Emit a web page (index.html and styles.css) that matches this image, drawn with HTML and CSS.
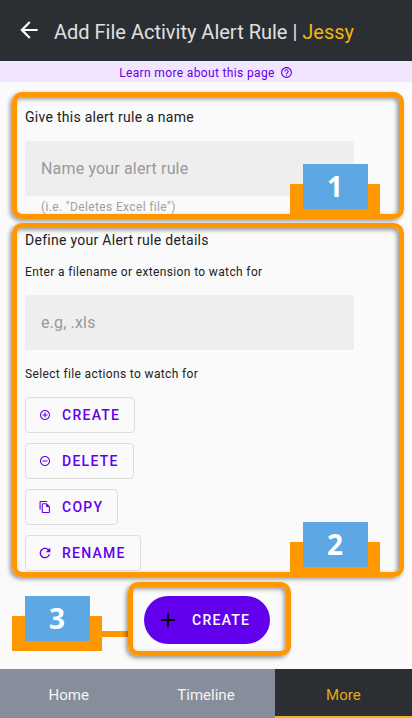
FILE: index.html
```html
<!DOCTYPE html>
<html lang="en">
<head>
<meta charset="UTF-8">
<meta name="viewport" content="width=device-width, initial-scale=1.0">
<title>Add File Activity Alert Rule</title>
<link rel="stylesheet" href="styles.css">
</head>
<body>
<header class="header">
    <button class="back" type="button" aria-label="Back">
        <svg width="26" height="26" viewBox="0 0 24 24" fill="#ffffff"><path d="M20 11H7.83l5.59-5.59L12 4l-8 8 8 8 1.41-1.41L7.83 13H20v-2z"/></svg>
    </button>
    <h1>Add File Activity Alert Rule | <span class="name">Jessy</span></h1>
</header>

<a class="learn" href="#">Learn more about this page
    <svg width="13" height="13" viewBox="0 0 24 24" fill="currentColor"><path d="M11 18h2v-2h-2v2zm1-16C6.48 2 2 6.48 2 12s4.48 10 10 10 10-4.48 10-10S17.52 2 12 2zm0 18c-4.41 0-8-3.59-8-8s3.59-8 8-8 8 3.59 8 8-3.59 8-8 8zm0-14c-2.21 0-4 1.79-4 4h2c0-1.1.9-2 2-2s2 .9 2 2c0 2-3 1.75-3 5h2c0-2.25 3-2.5 3-5 0-2.21-1.79-4-4-4z"/></svg>
</a>

<main>
    <!-- Step 1: rule name -->
    <section class="step step-name">
        <label class="title" for="ruleName">Give this alert rule a name</label>
        <input class="field" type="text" id="ruleName" placeholder="Name your alert rule">
        <div class="hint">(i.e. "Deletes Excel file")</div>
        <div class="badge"><span>1</span></div>
    </section>

    <!-- Step 2: rule details -->
    <section class="step step-details">
        <h2 class="title">Define your Alert rule details</h2>
        <label class="label" for="fileName">Enter a filename or extension to watch for</label>
        <input class="field" type="text" id="fileName" placeholder="e.g, .xls">
        <div class="label" id="actionsLabel">Select file actions to watch for</div>
        <div class="actions" role="group" aria-labelledby="actionsLabel">
            <button class="action" type="button">
                <svg width="12" height="12" viewBox="0 0 24 24" fill="currentColor"><path d="M13 7h-2v4H7v2h4v4h2v-4h4v-2h-4V7zm-1-5C6.48 2 2 6.48 2 12s4.48 10 10 10 10-4.48 10-10S17.52 2 12 2zm0 18c-4.41 0-8-3.59-8-8s3.59-8 8-8 8 3.59 8 8-3.59 8-8 8z"/></svg>
                CREATE
            </button>
            <button class="action" type="button">
                <svg width="12" height="12" viewBox="0 0 24 24" fill="currentColor"><path d="M7 11v2h10v-2H7zm5-9C6.48 2 2 6.48 2 12s4.48 10 10 10 10-4.48 10-10S17.52 2 12 2zm0 18c-4.41 0-8-3.59-8-8s3.59-8 8-8 8 3.59 8 8-3.59 8-8 8z"/></svg>
                DELETE
            </button>
            <button class="action" type="button">
                <svg width="12" height="12" viewBox="1 1 22 22" fill="currentColor"><path d="M16 1H4c-1.1 0-2 .9-2 2v14h2V3h12V1zm-1 4H8c-1.1 0-1.99.9-1.99 2L6 21c0 1.1.89 2 1.99 2H19c1.1 0 2-.9 2-2V11l-6-6zM8 21V7h6v5h5v9H8z"/></svg>
                COPY
            </button>
            <button class="action" type="button">
                <svg width="12" height="12" viewBox="3 3 18 18" fill="currentColor"><path d="M17.65 6.35C16.2 4.9 14.21 4 12 4c-4.42 0-7.99 3.58-7.99 8s3.57 8 7.99 8c3.73 0 6.84-2.55 7.73-6h-2.08c-.82 2.33-3.04 4-5.65 4-3.31 0-6-2.69-6-6s2.69-6 6-6c1.66 0 3.14.69 4.22 1.78L13 11h7V4l-2.35 2.35z"/></svg>
                RENAME
            </button>
        </div>
        <div class="badge"><span>2</span></div>
    </section>

    <!-- Step 3: submit -->
    <section class="submit-row">
        <div class="badge"><span>3</span></div>
        <div class="connector"></div>
        <div class="step step-submit">
            <button class="create" type="button">
                <svg width="24" height="24" viewBox="0 0 24 24" fill="#000000"><path d="M19 13h-6v6h-2v-6H5v-2h6V5h2v6h6v2z"/></svg>
                CREATE
            </button>
        </div>
    </section>
</main>

<nav class="tabs">
    <a href="#">Home</a>
    <a href="#">Timeline</a>
    <a class="active" href="#">More</a>
</nav>
</body>
</html>
```
FILE: styles.css
```css
* {
    box-sizing: border-box;
}
body {
    margin: 0;
    min-height: 100vh;
    display: flex;
    flex-direction: column;
    background-color: #fafafa;
    color: #212121;
    font-family: Roboto, sans-serif;
    font-size: 14px;
}
h1, h2 {
    margin: 0;
    font-weight: 400;
}
button {
    font-family: inherit;
    cursor: pointer;
}
.header {
    display: flex;
    align-items: center;
    gap: 12px;
    height: 61px;
    padding: 2px 16px 0;
    background-color: #2b2e33;
    color: #e0e0e0;
}
.header h1 {
    font-size: 20px;
    line-height: 24px;
}
.header .name {
    color: #f5b50a;
}
.back {
    display: flex;
    padding: 0 0 4px;
    border: none;
    background: none;
}
.learn {
    display: flex;
    justify-content: center;
    align-items: center;
    gap: 5px;
    height: 21px;
    padding-top: 2px;
    background-color: #f2e5ff;
    color: #6200ee;
    font-size: 12px;
    letter-spacing: 0.03em;
    text-decoration: none;
}
main {
    flex: 1;
    padding: 10px 8px 13px 12px;
}

/* Highlighted steps */
.step {
    position: relative;
    border: 5px solid #ff9800;
    border-radius: 10px;
    box-shadow: -2px 2px 4px rgba(0, 0, 0, 0.4), inset -2px 2px 4px rgba(0, 0, 0, 0.4);
}
.step-name {
    padding: 10px 8px 0;
}
.step-details {
    margin-top: 4px;
    padding: 2px 8px 1px;
}
.title {
    display: block;
    font-size: 14px;
    line-height: 20px;
    letter-spacing: 0.02em;
}
.label {
    display: block;
    margin: 12px 0 13px;
    font-size: 12px;
    line-height: 20px;
    letter-spacing: 0.03em;
}
.field {
    display: block;
    width: 90%;
    height: 55px;
    padding: 0 16px;
    border: none;
    border-radius: 4px 4px 0 0;
    background-color: #eeeeee;
    color: #212121;
    font-family: inherit;
    font-size: 16px;
    letter-spacing: 0.01em;
}
.field::placeholder {
    color: #999999;
}
.step-name .field {
    margin-top: 14px;
}
.step-details .field {
    margin-bottom: 14px;
}
.hint {
    margin-top: 4px;
    padding-left: 16px;
    color: #a0a0a0;
    font-size: 12px;
    line-height: 14px;
    letter-spacing: 0.03em;
}
.actions {
    display: flex;
    flex-direction: column;
    align-items: flex-start;
    gap: 10px;
}
.action {
    display: flex;
    align-items: center;
    gap: 11px;
    height: 36px;
    padding: 0 14px 0 13px;
    border: 1px solid #dddddd;
    border-radius: 4px;
    background: none;
    color: #6200ee;
    font-size: 14px;
    font-weight: 500;
    letter-spacing: 0.09em;
}

/* Numbered badges */
.badge {
    width: 90px;
    height: 30px;
    background-color: #ff9800;
}
.badge span {
    position: relative;
    top: -20px;
    display: block;
    width: 65px;
    height: 45px;
    margin: 0 auto;
    background-color: #5ea7e5;
    color: #ffffff;
    font-family: "Open Sans", sans-serif;
    font-size: 28px;
    font-weight: 700;
    line-height: 44px;
    text-align: center;
}
.step .badge {
    position: absolute;
    right: 19px;
    bottom: 0;
}

/* Submit */
.submit-row {
    display: flex;
    align-items: flex-end;
    margin-top: 5px;
}
.submit-row .badge {
    height: 35px;
    margin-bottom: 5px;
}
.connector {
    width: 26px;
    height: 6px;
    margin-bottom: 19px;
    background-color: #ff9800;
}
.step-submit {
    padding: 9px 16px 7px 11px;
}
.create {
    display: flex;
    align-items: center;
    gap: 12px;
    height: 48px;
    padding: 0 20px 0 12px;
    border: none;
    border-radius: 24px;
    background-color: #6200ee;
    color: #ffffff;
    font-size: 14px;
    font-weight: 500;
    letter-spacing: 0.09em;
}

/* Bottom navigation */
.tabs {
    display: grid;
    grid-template-columns: repeat(3, 1fr);
    height: 49px;
    background-color: #868e9b;
}
.tabs a {
    display: flex;
    align-items: center;
    justify-content: center;
    border-bottom: 2px solid transparent;
    padding-top: 4px;
    color: #f5f5f5;
    font-size: 15px;
    text-decoration: none;
}
.tabs .active {
    border-bottom-color: #f0b323;
    background-color: #2b2e33;
    color: #e5ac0c;
}
```
